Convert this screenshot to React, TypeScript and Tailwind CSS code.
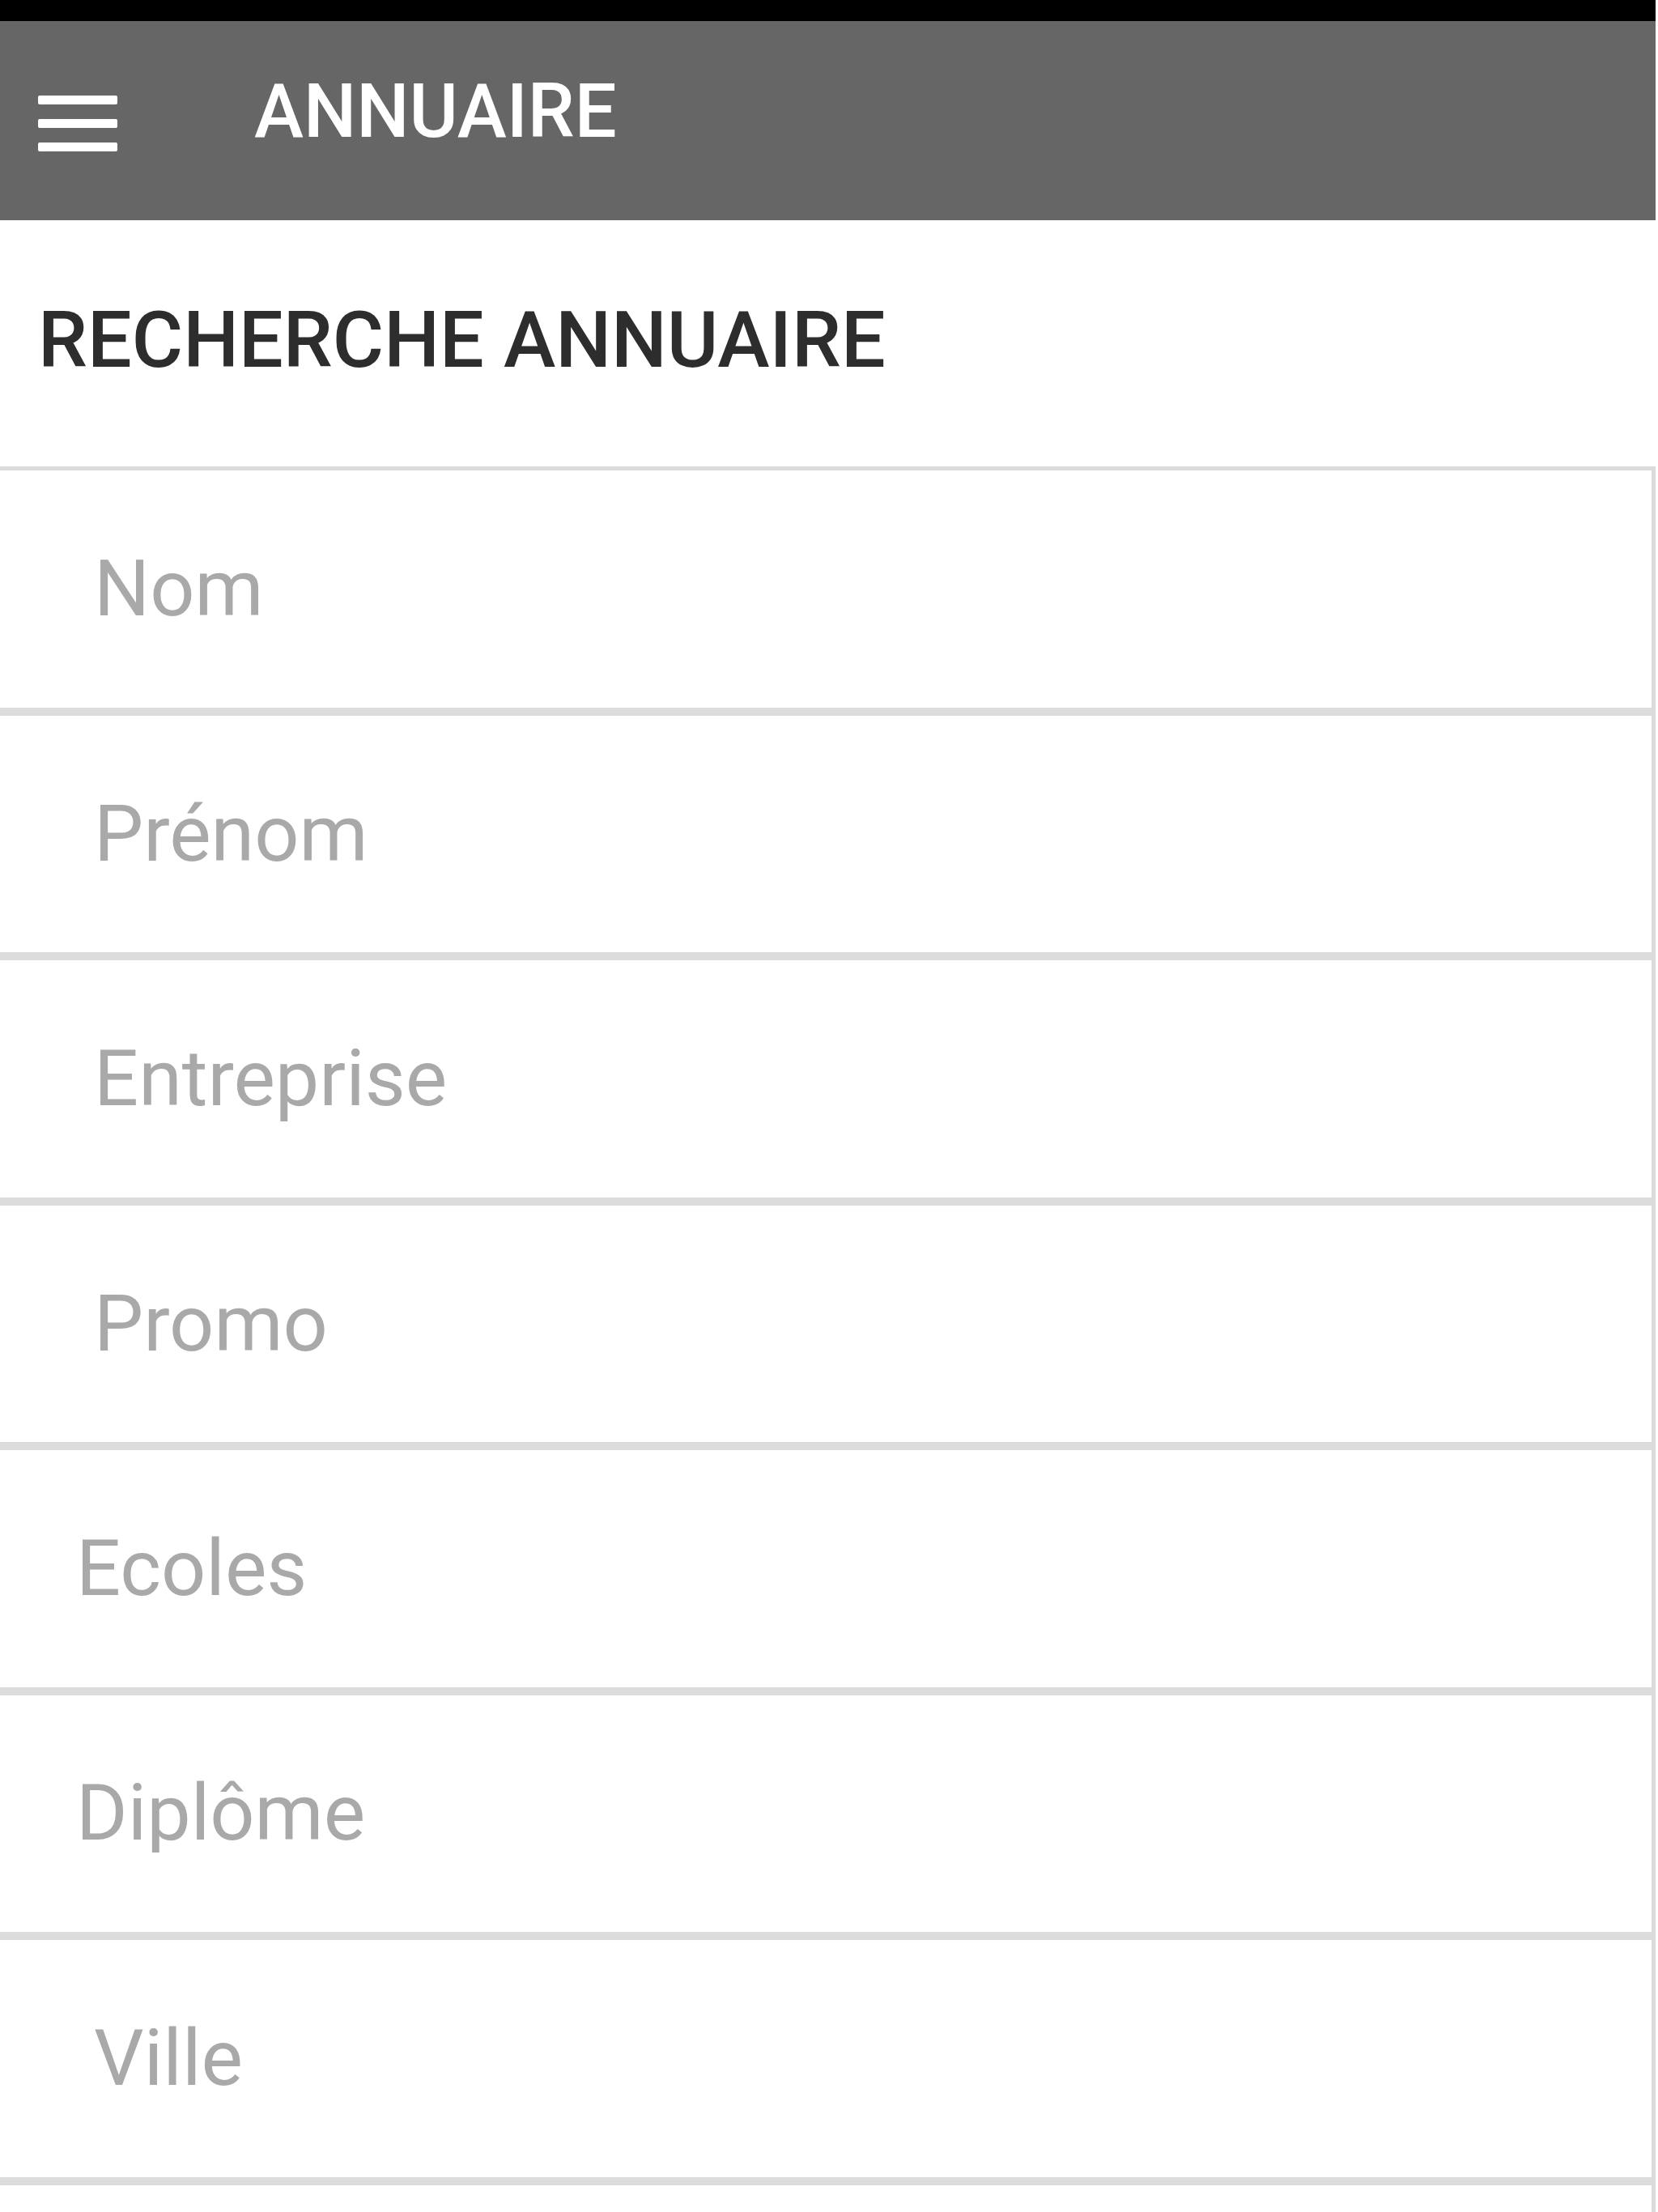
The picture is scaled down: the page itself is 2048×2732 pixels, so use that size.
import React from 'react';

const fields: { label: string; kind: 'input' | 'select' }[] = [
  { label: 'Nom', kind: 'input' },
  { label: 'Prénom', kind: 'input' },
  { label: 'Entreprise', kind: 'input' },
  { label: 'Promo', kind: 'input' },
  { label: 'Ecoles', kind: 'select' },
  { label: 'Diplôme', kind: 'select' },
  { label: 'Ville', kind: 'input' },
  { label: '', kind: 'input' },
];

const Field = ({ label, kind }: { label: string; kind: 'input' | 'select' }) => (
  <div className="h-[302.5px] border-[5px] border-l-0 border-[#dcdcdc] bg-white flex items-center">
    {kind === 'input' ? (
      <input
        type="text"
        placeholder={label}
        className="w-full bg-transparent pl-[116px] text-[97px] leading-none text-[#333] placeholder:text-[#a9a9a9] outline-none"
      />
    ) : (
      <select
        defaultValue=""
        className="w-full appearance-none bg-transparent pl-[94px] text-[97px] leading-none text-[#a9a9a9] outline-none"
      >
        <option value="" disabled>
          {label}
        </option>
      </select>
    )}
  </div>
);

export default function App() {
  return (
    <div className="w-[2045px] min-h-[2732px] bg-white font-['Roboto','Liberation_Sans',sans-serif]">
      <div className="h-[26px] bg-black"></div>

      {/* top bar */}
      <header className="h-[246px] bg-[#666666] flex items-start pl-[47px]">
        <button className="mt-[92px] w-[98px] flex flex-col gap-[18px]">
          <span className="block h-[11px] bg-white rounded-[2px]"></span>
          <span className="block h-[11px] bg-white rounded-[2px]"></span>
          <span className="block h-[11px] bg-white rounded-[2px]"></span>
        </button>
        <h1 className="ml-[169px] mt-[66px] text-[92px] leading-none font-medium text-white">ANNUAIRE</h1>
      </header>

      <section className="pt-[100px] pb-[107px] pl-[47px]">
        <h2 className="text-[97px] leading-none font-medium text-[#2d2d2d]">RECHERCHE ANNUAIRE</h2>
      </section>

      <form className="flex flex-col">
        {fields.map((f, i) => (
          <Field key={i} label={f.label} kind={f.kind} />
        ))}
      </form>
    </div>
  );
}
